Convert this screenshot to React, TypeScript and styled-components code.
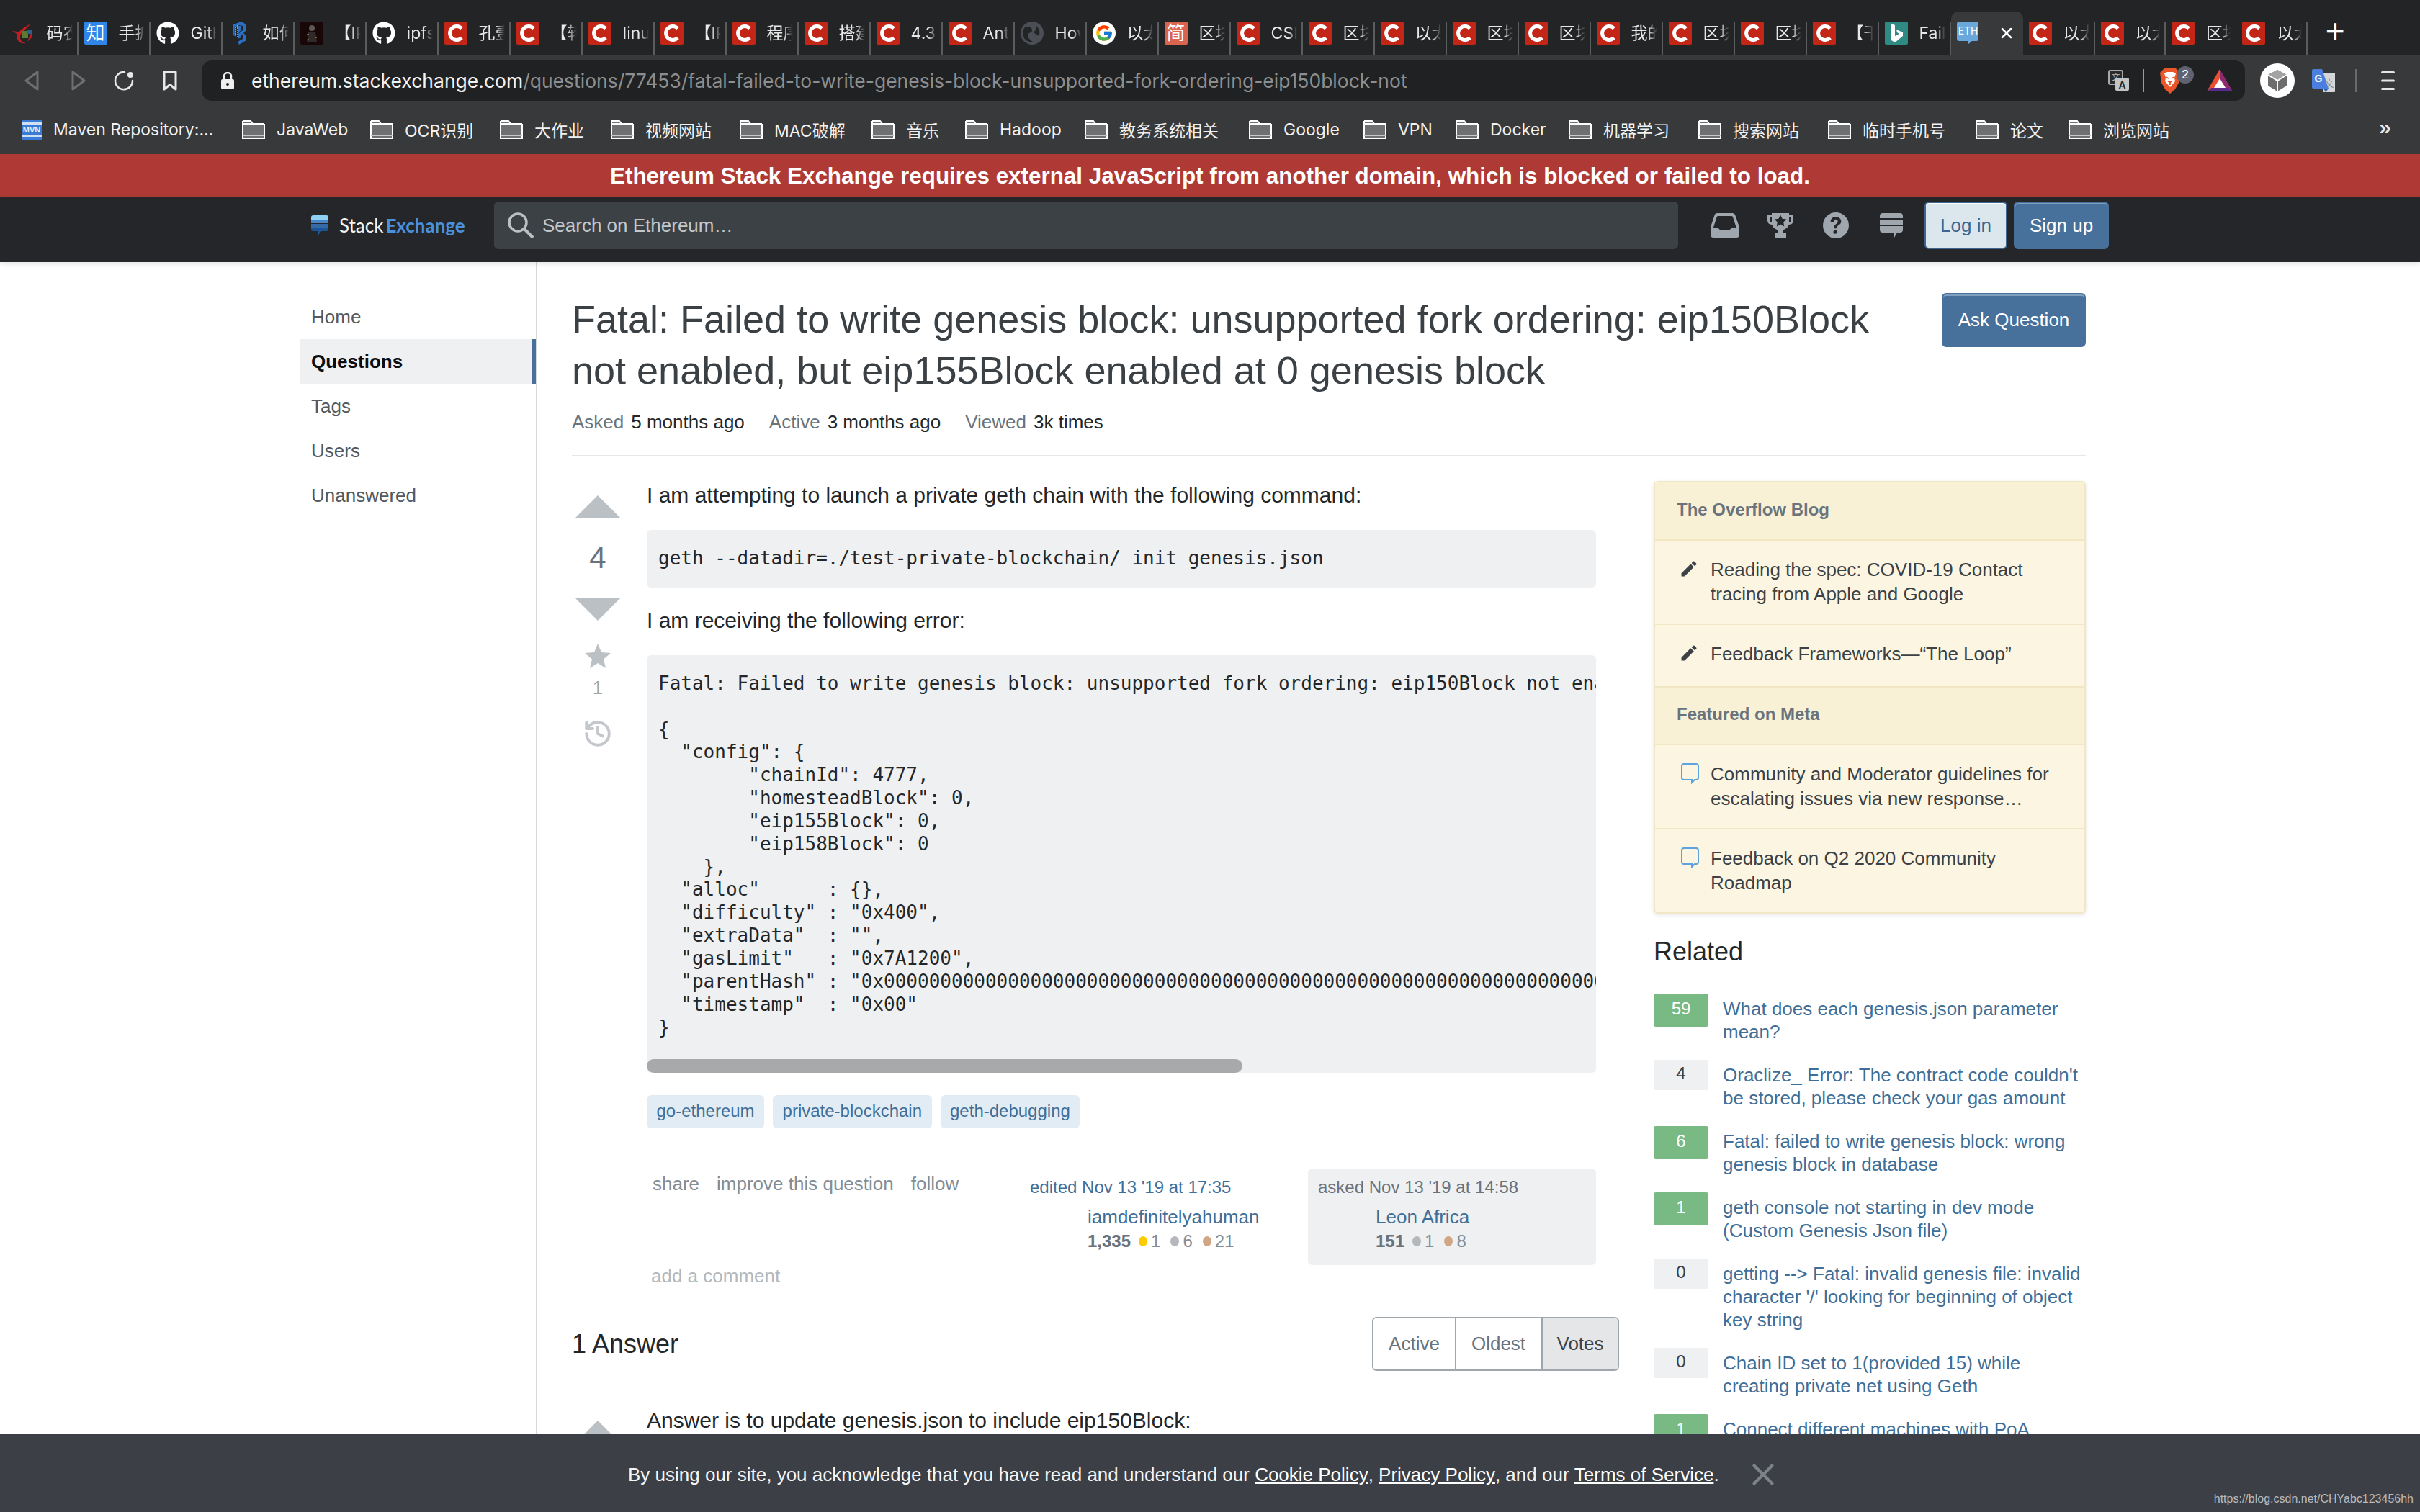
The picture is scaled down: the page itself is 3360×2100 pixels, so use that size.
import styled, { createGlobalStyle } from "styled-components";
import { History, X } from "lucide-react";
import { FaGithub } from "react-icons/fa";
import { FcGoogle } from "react-icons/fc";

const chromeFont = `"Inter", "Noto Sans CJK SC", sans-serif`;

const GlobalStyle = createGlobalStyle`
  html, body {
    margin: 0;
    padding: 0;
    background: #fff;
    font-family: "Liberation Sans", "Noto Sans CJK SC", sans-serif;
  }
  * { box-sizing: border-box; }
`;

const Page = styled.div`
  position: relative;
  width: 3360px;
  height: 2100px;
  overflow: hidden;
  background: #fff;
`;

/* browser chrome */
const TabStrip = styled.div`
  display: flex;
  align-items: flex-end;
  height: 76px;
  padding-left: 8.6px;
  background: #232425;
`;

const Tab = styled.div<{ $width?: number; $active?: boolean }>`
  position: relative;
  display: flex;
  flex: none;
  gap: 16px;
  width: ${(p) => p.$width ?? 100}px;
  height: 60px;
  padding: 14px 8px 0;
  border-radius: 10px 10px 0 0;
  background: ${(p) => (p.$active ? "#38393a" : "transparent")};
  color: #e8e8e8;
  font-family: ${chromeFont};
  font-size: 23px;
  line-height: 32px;
  &::after {
    content: "";
    position: absolute;
    top: 14px;
    right: 0;
    bottom: 0;
    width: 1.5px;
    background: ${(p) => (p.$active ? "transparent" : "#5b5c5d")};
  }
`;

const TabTitle = styled.span`
  flex: 1;
  min-width: 0;
  overflow: hidden;
  white-space: nowrap;
  -webkit-mask-image: linear-gradient(to right, #000 65%, transparent 100%);
  mask-image: linear-gradient(to right, #000 65%, transparent 100%);
`;

const TabClose = styled.span`
  display: flex;
  align-items: center;
  margin-left: 9px;
  height: 32px;
  color: #fff;
`;

const NewTab = styled.span`
  margin-left: 25px;
  width: 24px;
  height: 60px;
  color: #fff;
  font-size: 46px;
  line-height: 54px;
  text-align: center;
`;

const Favicon = styled.span<{ $bg?: string; $round?: boolean }>`
  position: relative;
  display: flex;
  flex: none;
  align-items: center;
  justify-content: center;
  width: 32px;
  height: 32px;
  overflow: hidden;
  border-radius: ${(p) => (p.$round ? "50%" : "2px")};
  background: ${(p) => p.$bg ?? "transparent"};
  color: #fff;
  font-size: 26px;
  line-height: 32px;
`;

const EthLabel = styled.span`
  position: relative;
  margin-top: -6px;
  font-size: 14px;
`;

const EthBubble = styled.svg`
  position: absolute;
  top: 0;
  left: 0;
`;

const Toolbar = styled.div`
  display: flex;
  align-items: center;
  height: 64px;
  padding-top: 8px;
  background: #38393a;
`;

const NavIcons = styled.div`
  display: flex;
  align-items: center;
  width: 280px;
  height: 56px;
  padding-left: 34px;
`;

const NavSlot = styled.span<{ $width: number }>`
  display: flex;
  flex: none;
  align-items: center;
  width: ${(p) => p.$width}px;
`;

const AddressBar = styled.div`
  display: flex;
  align-items: center;
  width: 2837px;
  height: 56px;
  padding: 0 0 0 27px;
  border-radius: 14px;
  background: #202122;
`;

const LockSlot = styled.span`
  display: flex;
  width: 42px;
`;

const Url = styled.div`
  flex: 1;
  color: #8d8e8f;
  font-family: ${chromeFont};
  font-size: 26.5px;
  white-space: nowrap;
`;

const UrlHost = styled.span`
  color: #f2f2f2;
`;

const ExtensionRow = styled.div`
  display: flex;
  align-items: center;
  height: 56px;
  padding-right: 17px;
`;

const VerticalRule = styled.span<{ $margin: string; $color: string }>`
  display: block;
  width: 2px;
  height: 32px;
  margin: ${(p) => p.$margin};
  background: ${(p) => p.$color};
`;

const BraveWrap = styled.span`
  position: relative;
  display: block;
  width: 28px;
  height: 36px;
  margin-right: 37px;
`;

const BraveBadge = styled.span`
  position: absolute;
  top: -2px;
  right: -19px;
  width: 24px;
  height: 24px;
  border-radius: 50%;
  background: #5f6270;
  color: #fff;
  font-size: 17px;
  line-height: 24px;
  text-align: center;
`;

const ProfileRow = styled.div`
  display: flex;
  align-items: center;
  margin-left: 21px;
`;

const TranslateIcon = styled.svg`
  margin-left: 24px;
`;

const BookmarkBar = styled.div`
  position: relative;
  display: flex;
  align-items: center;
  height: 74px;
  padding: 6px 0 0 30px;
  background: #38393a;
`;

const BookmarkItem = styled.div<{ $width: number }>`
  display: flex;
  flex: none;
  align-items: center;
  gap: 16px;
  width: ${(p) => p.$width}px;
  color: #f1f1f1;
  font-family: ${chromeFont};
  font-size: 23px;
  white-space: nowrap;
`;

const MoreBookmarks = styled.span`
  position: absolute;
  top: 20px;
  right: 40px;
  color: #e6e6e6;
  font-size: 30px;
  font-weight: 700;
`;

const Notice = styled.div`
  height: 60px;
  background: #ae3935;
  color: #fff;
  font-size: 31.4px;
  font-weight: 700;
  line-height: 61px;
  text-align: center;
`;

/* site header */
const TopBar = styled.header`
  position: relative;
  z-index: 1;
  display: flex;
  align-items: center;
  height: 90px;
  padding: 0 0 12px 432px;
  background: #242629;
  box-shadow: 0 2px 8px rgba(0, 0, 0, 0.12);
`;

const Logo = styled.div`
  display: flex;
  align-items: center;
  gap: 15px;
  width: 254px;
  color: #f2f3f3;
  font-family: "Lato", sans-serif;
  font-size: 26px;
`;

const LogoAccent = styled.span`
  margin-left: 3px;
  color: #4a90dc;
  font-weight: 700;
`;

const Search = styled.div`
  display: flex;
  align-items: center;
  gap: 11px;
  width: 1644px;
  height: 66px;
  padding-left: 18px;
  border-radius: 6px;
  background: #3c4146;
  color: #c3c7cb;
  font-size: 26px;
`;

const TopIcons = styled.div`
  display: flex;
  margin: 0 8px 0 26px;
`;

const TopIcon = styled.span`
  display: flex;
  align-items: center;
  justify-content: center;
  width: 77px;
  height: 66px;
`;

const HeaderButton = styled.button<{ $primary?: boolean }>`
  height: 66px;
  margin-right: 9px;
  padding: 0;
  width: ${(p) => (p.$primary ? 132 : 115)}px;
  border: 2px solid ${(p) => (p.$primary ? "#47709b" : "#3d6791")};
  border-radius: 6px;
  background: ${(p) => (p.$primary ? "#47709b" : "#dce6ed")};
  box-shadow: inset 0 2px 0 ${(p) => (p.$primary ? "#7f9fbf" : "#fff")};
  color: ${(p) => (p.$primary ? "#fff" : "#3d6791")};
  font-family: inherit;
  font-size: 26px;
`;

/* page body */
const Body = styled.div`
  display: flex;
  padding-left: 416px;
`;

const LeftNav = styled.nav`
  flex: none;
  width: 330px;
  min-height: 1800px;
  padding-top: 45px;
  border-right: 2px solid #d6d9dc;
`;

const NavItem = styled.div<{ $current?: boolean }>`
  height: 62px;
  padding-left: 16px;
  border-right: ${(p) => (p.$current ? "6px solid #47709b" : "none")};
  background: ${(p) => (p.$current ? "#eff0f1" : "transparent")};
  color: ${(p) => (p.$current ? "#0c0d0e" : "#525960")};
  font-size: 26px;
  font-weight: ${(p) => (p.$current ? 700 : 400)};
  line-height: 62px;
`;

const Content = styled.main`
  width: 2150px;
  padding: 44px 0 0 48px;
`;

const QuestionHead = styled.div`
  display: flex;
  justify-content: space-between;
  width: 2102px;
`;

const Title = styled.h1`
  width: 1850px;
  margin: 0;
  color: #3b4045;
  font-size: 54px;
  font-weight: 400;
  line-height: 71px;
`;

const AskButton = styled.button`
  flex: none;
  width: 200px;
  height: 75px;
  margin-top: -1px;
  padding: 0;
  border: 2px solid #47709b;
  border-radius: 6px;
  background: #47709b;
  box-shadow: inset 0 2px 0 #7f9fbf;
  color: #fff;
  font-family: inherit;
  font-size: 26px;
`;

const Stats = styled.div`
  display: flex;
  gap: 34px;
  width: 2102px;
  height: 70px;
  margin-top: 14px;
  padding-top: 2px;
  border-bottom: 2px solid #e4e6e8;
  font-size: 26px;
  line-height: 40px;
`;

const Stat = styled.span`
  color: #242729;
`;

const StatLabel = styled.span`
  margin-right: 10px;
  color: #6a737c;
`;

const Columns = styled.div`
  display: flex;
  gap: 48px;
  width: 2102px;
  padding-top: 34px;
`;

const MainColumn = styled.div`
  flex: none;
  width: 1454px;
`;

const PostRow = styled.div`
  display: flex;
`;

const VoteCell = styled.div`
  display: flex;
  flex: none;
  flex-direction: column;
  align-items: center;
  width: 72px;
  margin-right: 32px;
  padding-top: 20px;
`;

const Arrow = styled.span<{ $down?: boolean }>`
  width: 0;
  height: 0;
  border-left: 32px solid transparent;
  border-right: 32px solid transparent;
  ${(p) => (p.$down ? "border-top: 32px solid #bbc0c4;" : "border-bottom: 32px solid #bbc0c4;")}
`;

const VoteCount = styled.div`
  height: 110px;
  color: #6a737c;
  font-size: 42px;
  line-height: 110px;
`;

const FavStar = styled.svg`
  margin-top: 32px;
`;

const FavCount = styled.div`
  margin: 12px 0 28px;
  color: #9fa6ad;
  font-size: 26px;
  line-height: 30px;
`;

const PostBody = styled.div`
  width: 1318px;
  min-width: 0;
`;

const Para = styled.p<{ $top?: number }>`
  margin: ${(p) => p.$top ?? 0}px 0 0;
  color: #242729;
  font-size: 30px;
  line-height: 39px;
`;

const CodeBlock = styled.div<{ $top: number }>`
  margin-top: ${(p) => p.$top}px;
  border-radius: 6px;
  background: #eff0f1;
  overflow: hidden;
`;

const Code = styled.pre<{ $padTop: number; $padBottom: number }>`
  margin: 0;
  padding: ${(p) => p.$padTop}px 16px ${(p) => p.$padBottom}px;
  overflow: hidden;
  color: #242729;
  font-family: "DejaVu Sans Mono", monospace;
  font-size: 26px;
  line-height: 31.85px;
`;

const ScrollThumb = styled.div<{ $width: number }>`
  width: ${(p) => p.$width}px;
  height: 19px;
  border-radius: 10px;
  background: #a8a9aa;
`;

const TagRow = styled.div`
  display: flex;
  gap: 12px;
  margin-top: 31px;
`;

const TagPill = styled.span`
  height: 46px;
  padding: 0 13.5px;
  border-radius: 6px;
  background: #e1ecf4;
  color: #3f6f98;
  font-size: 24px;
  line-height: 44px;
`;

const PostMenuRow = styled.div`
  display: flex;
  margin-top: 56px;
`;

const PostLinks = styled.div`
  display: flex;
  flex: 1;
  gap: 24px;
  padding: 6px 0 0 8px;
  color: #848d95;
  font-size: 26px;
  line-height: 30px;
`;

const UserCard = styled.div<{ $owner?: boolean }>`
  flex: none;
  width: 400px;
  height: 134px;
  padding: 12px 14px;
  border-radius: 6px;
  background: ${(p) => (p.$owner ? "#eff0f1" : "transparent")};
  color: ${(p) => (p.$owner ? "#6a737c" : "#3f6f98")};
  font-size: 24px;
  line-height: 28px;
`;

const UserName = styled.div`
  margin: 12px 0 0 80px;
  color: #3f6f98;
  font-size: 26px;
  line-height: 30px;
`;

const UserRep = styled.div`
  display: flex;
  align-items: center;
  margin: 4px 0 0 80px;
  color: #848d95;
  font-size: 24px;
  line-height: 30px;
`;

const RepValue = styled.b`
  margin-right: 11px;
  color: #6a737c;
`;

const Dot = styled.i<{ $color: string }>`
  display: block;
  width: 12px;
  height: 14px;
  margin-right: 5px;
  border-radius: 50%;
  background: ${(p) => p.$color};
`;

const BadgeCount = styled.span`
  margin-right: 14px;
`;

const AddComment = styled.div`
  margin: -1px 0 0 6px;
  color: #b3b8bc;
  font-size: 26px;
  line-height: 32px;
`;

const AnswerHead = styled.div`
  display: flex;
  align-items: center;
  justify-content: space-between;
  margin-top: 41px;
`;

const AnswerTitle = styled.h2`
  margin: 0;
  color: #242729;
  font-size: 36px;
  font-weight: 400;
`;

const SortGroup = styled.div`
  display: flex;
  height: 75px;
  border: 2px solid #9fa6ad;
  border-radius: 6px;
  overflow: hidden;
`;

const SortButton = styled.span<{ $width: number; $on?: boolean }>`
  width: ${(p) => p.$width}px;
  border-left: ${(p) => (p.$on ? "2px solid #9fa6ad" : "1px solid #9fa6ad")};
  background: ${(p) => (p.$on ? "#e4e6e8" : "#fff")};
  color: ${(p) => (p.$on ? "#3c4146" : "#6a737c")};
  font-size: 26px;
  line-height: 71px;
  text-align: center;
  &:first-child {
    border-left: none;
  }
`;

const AnswerRow = styled(PostRow)`
  margin-top: 49px;
`;

/* right sidebar */
const SideColumn = styled.aside`
  flex: none;
  width: 600px;
`;

const YellowBox = styled.div`
  border: 2px solid #f1e7c4;
  border-radius: 6px;
  background: #fbf5e1;
  box-shadow: 0 2px 6px rgba(0, 0, 0, 0.1);
`;

const YellowHead = styled.div<{ $first?: boolean }>`
  height: ${(p) => (p.$first ? 79 : 80)}px;
  border-top: ${(p) => (p.$first ? "none" : "2px solid #f1e7c4")};
  padding-left: 30px;
  background: #f9f1d6;
  color: #6a737c;
  font-size: 24px;
  font-weight: 700;
  line-height: ${(p) => (p.$first ? 76 : 74)}px;
`;

const YellowItem = styled.div`
  display: flex;
  border-top: 2px solid #f1e7c4;
  padding: 23px 24px 24px 33px;
  color: #3c4146;
  font-size: 26px;
  line-height: 34px;
`;

const ItemIcon = styled.span`
  flex: none;
  width: 44px;
  padding-top: 2px;
`;

const RelatedTitle = styled.h4`
  margin: 28px 0 33px;
  color: #242729;
  font-size: 36px;
  font-weight: 400;
  line-height: 50px;
`;

const RelatedList = styled.div`
  display: flex;
  flex-direction: column;
  gap: 23px;
`;

const RelatedRow = styled.div`
  display: flex;
  gap: 20px;
`;

const Score = styled.span<{ $answered: boolean }>`
  flex: none;
  width: 76px;
  height: ${(p) => (p.$answered ? 46 : 42)}px;
  border-radius: 3px;
  background: ${(p) => (p.$answered ? "#79b983" : "#eff0f1")};
  color: ${(p) => (p.$answered ? "#fff" : "#3c4146")};
  font-size: 24px;
  line-height: ${(p) => (p.$answered ? 42 : 38)}px;
  text-align: center;
`;

const RelatedLink = styled.span`
  width: 500px;
  margin-top: 5px;
  color: #3f6f98;
  font-size: 26px;
  line-height: 32px;
`;

/* overlays */
const CookieBar = styled.div`
  position: absolute;
  left: 0;
  right: 0;
  bottom: 0;
  display: flex;
  align-items: center;
  height: 108px;
  padding: 4px 0 0 872px;
  background: #3c4046;
  color: #f4f4f5;
  font-size: 26px;
`;

const CookieLink = styled.span`
  color: #fff;
  text-decoration: underline;
`;

const CookieClose = styled.span`
  display: flex;
  margin-left: 36px;
  color: #7d8288;
`;

const Watermark = styled.span`
  position: absolute;
  right: 9px;
  bottom: 9px;
  color: #b9babc;
  font-size: 16px;
`;

const CsdnIcon = () => (
  <Favicon $bg="#c32516">
    <svg width="24" height="26" viewBox="0 0 24 26">
      <path d="M20 6.5 A9.5 9.5 0 1 0 20 19.5" fill="none" stroke="#fff" strokeWidth="5" />
    </svg>
  </Favicon>
);

const tabIcon = (kind: string) => {
  switch (kind) {
    case "flame":
      return (
        <Favicon>
          <svg width="32" height="32" viewBox="0 0 32 32">
            <path d="M25 1c0 4-6 5-11 9C9 14 5 18 7 24c1 4 6 7 12 6-4-1-8-3-8-8 0-6 5-9 9-13 3-3 5-5 5-8z" fill="#c61d22" />
            <path d="M0 13c4 0 7 1 10 3l-2 2C5 16 3 15 0 13z" fill="#c61d22" />
            <rect x="14" y="13" width="8" height="10" fill="#5d7a33" />
            <rect x="21" y="11" width="6" height="6" fill="#2d5f8f" />
            <path d="M27 17c1 4-1 8-6 10 2-3 3-6 3-9z" fill="#c61d22" />
          </svg>
        </Favicon>
      );
    case "zhi":
      return <Favicon $bg="#2f85e8">知</Favicon>;
    case "github":
      return (
        <Favicon>
          <FaGithub size={32} color="#fff" />
        </Favicon>
      );
    case "b3":
      return (
        <Favicon>
          <svg width="20" height="32" viewBox="0 0 20 32">
            <path d="M1 4l11-4 7 4v8l-4 4 4 4v6l-10 6-2-4 7-4v-5l-5-3 5-4V6l-5-1-4 2v14l-4-2z" fill="#2a6fc0" />
            <path d="M2 7v11l3 2V5z" fill="#1f5ba6" />
            <path d="M3 8h1M3 11h1M3 14h1M3 17h1M6 6h1M6 9h1M6 12h1M6 15h1M6 18h1M6 21h1" stroke="#8fb9e6" strokeWidth="1.5" />
            <path d="M7 6h5v6l-4 3 4 3v4l-5 2z" fill="#2a6fc0" />
          </svg>
        </Favicon>
      );
    case "dark":
      return (
        <Favicon $bg="#190606">
          <svg width="20" height="28" viewBox="0 0 20 28">
            <circle cx="10" cy="7" r="4" fill="#5d5a55" />
            <path d="M5 12h10l2 14H3z" fill="#2f2b2a" />
            <path d="M3 16h3M14 20h3M4 23h2" stroke="#a8773c" strokeWidth="1.5" />
          </svg>
        </Favicon>
      );
    case "globe":
      return (
        <Favicon $bg="#4b4e55" $round>
          <svg width="32" height="32" viewBox="0 0 32 32">
            <path d="M6 8c5-2 10 0 10 4s-6 3-6 7 4 7 7 9c-6 1-14-3-14-12 0-3 1-6 3-8zM22 6c4 4 6 9 3 14-2-3-5-2-6-5 0-3 4-3 3-9z" fill="#232425" />
          </svg>
        </Favicon>
      );
    case "google":
      return (
        <Favicon $bg="#fff" $round>
          <FcGoogle size={26} />
        </Favicon>
      );
    case "jian":
      return <Favicon $bg="#d9654f">简</Favicon>;
    case "bing":
      return (
        <Favicon $bg="#2f8a84">
          <svg width="20" height="28" viewBox="0 0 20 28">
            <path d="M3 1l5 2v15l6-3-3-2-1-4 9 4v5L8 27l-5-3z" fill="#fff" />
          </svg>
        </Favicon>
      );
    case "eth":
      return (
        <Favicon>
          <EthBubble width="30" height="32" viewBox="0 0 30 32">
            <path d="M3 0h24a3 3 0 0 1 3 3v21a3 3 0 0 1-3 3h-6l-6 5v-5H3a3 3 0 0 1-3-3V3a3 3 0 0 1 3-3z" fill="#6aa8dc" />
          </EthBubble>
          <EthLabel>ETH</EthLabel>
        </Favicon>
      );
    default:
      return <CsdnIcon />;
  }
};

const tabs: [string, string][] = [
  ["flame", "码农"], ["zhi", "手抓"], ["github", "GitHub"], ["b3", "如何"], ["dark", "【IPFS"], ["github", "ipfs"],
  ["c", "孔壹"], ["c", "【转"], ["c", "linux"], ["c", "【IPFS"], ["c", "程序"], ["c", "搭建"], ["c", "4.3"],
  ["c", "Ant"], ["globe", "How"], ["google", "以太"], ["jian", "区块"], ["c", "CSDN"], ["c", "区块"], ["c", "以太"],
  ["c", "区块"], ["c", "区块"], ["c", "我的"], ["c", "区块"], ["c", "区块"], ["c", "【干"], ["bing", "Fail"],
];

const trailingTabs: [string, number][] = [["以太", 100], ["以太", 98.4], ["区块", 98.4], ["以太", 98.4]];

const bookmarks: [string, number][] = [
  ["JavaWeb", 178], ["OCR识别", 180], ["大作业", 154], ["视频网站", 179], ["MAC破解", 183], ["音乐", 130],
  ["Hadoop", 166], ["教务系统相关", 228], ["Google", 159], ["VPN", 128], ["Docker", 157], ["机器学习", 180],
  ["搜索网站", 180], ["临时手机号", 205], ["论文", 129], ["浏览网站", 180],
];

const FolderIcon = () => (
  <svg width="32" height="26" viewBox="0 0 32 26">
    <path d="M1 4V1h11l3 4h16v20H1z" fill="#6f7071" />
    <path d="M1 5h30M1 1h11l3 4" fill="none" stroke="#fff" strokeWidth="2" />
    <path d="M1 1v24h30V5" fill="none" stroke="#fff" strokeWidth="2" />
    <path d="M1 21h30" stroke="#c9c9c9" strokeWidth="2" />
  </svg>
);

const MavenIcon = () => (
  <svg width="28" height="28" viewBox="0 0 28 28">
    <rect width="28" height="28" fill="#cfe0f5" />
    <rect width="28" height="4" fill="#3a7bd5" />
    <rect y="7" width="28" height="14" fill="#3a7bd5" />
    <rect y="24" width="28" height="4" fill="#3a7bd5" />
    <text x="14" y="18" fill="#e8f1fb" fontFamily="Liberation Sans" fontSize="11" fontWeight="700" textAnchor="middle">MVN</text>
  </svg>
);

const StackLogo = () => (
  <svg width="24" height="28" viewBox="0 0 24 28">
    <path d="M3 0h18a3 3 0 0 1 3 3v3H0V3a3 3 0 0 1 3-3z" fill="#8fd0f5" />
    <rect y="7" width="24" height="4" fill="#4a86c5" />
    <rect y="12" width="24" height="5" fill="#3669a8" />
    <path d="M0 18h24v1a3 3 0 0 1-3 3h-7l-1 0-3 6v-6H3a3 3 0 0 1-3-3z" fill="#1f5596" />
  </svg>
);

const Edit = () => (
  <svg width="28" height="28" viewBox="0 0 24 24" fill="#3c4146">
    <path d="M3 17.25V21h3.75L17.81 9.94l-3.75-3.75L3 17.25zM20.71 7.04a1 1 0 0 0 0-1.41l-2.34-2.34a1 1 0 0 0-1.41 0l-1.83 1.83 3.75 3.75 1.83-1.83z" />
  </svg>
);

const Bubble = () => (
  <svg width="28" height="29" viewBox="-3 0 28 29">
    <path d="M4 1h17a3 3 0 0 1 3 3v16a3 3 0 0 1-3 3h-2l-4 4v-4H4a3 3 0 0 1-3-3V4a3 3 0 0 1 3-3z" fill="none" stroke="#5ba4e0" strokeWidth="2" />
  </svg>
);

const related: [number, string][] = [
  [59, "What does each genesis.json parameter mean?"],
  [4, "Oraclize_ Error: The contract code couldn't be stored, please check your gas amount"],
  [6, "Fatal: failed to write genesis block: wrong genesis block in database"],
  [1, "geth console not starting in dev mode (Custom Genesis Json file)"],
  [0, "getting --> Fatal: invalid genesis file: invalid character '/' looking for beginning of object key string"],
  [0, "Chain ID set to 1(provided 15) while creating private net using Geth"],
  [1, "Connect different machines with PoA"],
];

const errorText = `Fatal: Failed to write genesis block: unsupported fork ordering: eip150Block not enabled, but eip155Block enabled at 0

{
  "config": {
        "chainId": 4777,
        "homesteadBlock": 0,
        "eip155Block": 0,
        "eip158Block": 0
    },
  "alloc"      : {},
  "difficulty" : "0x400",
  "extraData"  : "",
  "gasLimit"   : "0x7A1200",
  "parentHash" : "0x0000000000000000000000000000000000000000000000000000000000000000",
  "timestamp"  : "0x00"
}`;

export default function App() {
  return (
    <Page>
      <GlobalStyle />
      <TabStrip>
        {tabs.map(([icon, title], i) => (
          <Tab key={i}>
            {tabIcon(icon)}
            <TabTitle>{title}</TabTitle>
          </Tab>
        ))}
        <Tab $active>
          {tabIcon("eth")}
          <TabClose>
            <X size={24} strokeWidth={2.5} />
          </TabClose>
        </Tab>
        {trailingTabs.map(([title, width], i) => (
          <Tab key={i} $width={width}>
            <CsdnIcon />
            <TabTitle>{title}</TabTitle>
          </Tab>
        ))}
        <NewTab>+</NewTab>
      </TabStrip>

      <Toolbar>
        <NavIcons>
          <NavSlot $width={65}>
            <svg width="20" height="28" viewBox="0 0 20 28">
              <path d="M18 2v24L2 14z" fill="none" stroke="#6e6f70" strokeWidth="3" strokeLinejoin="round" />
            </svg>
          </NavSlot>
          <NavSlot $width={59}>
            <svg width="20" height="28" viewBox="0 0 20 28">
              <path d="M2 2v24l16-12z" fill="none" stroke="#6e6f70" strokeWidth="3" strokeLinejoin="round" />
            </svg>
          </NavSlot>
          <NavSlot $width={68}>
            <svg width="28" height="28" viewBox="0 0 28 28">
              <path d="M15 2.200A12 12 0 1 0 26 14" fill="none" stroke="#e8e8e8" strokeWidth="2.600" strokeLinecap="round" />
              <circle cx="23" cy="6" r="4" fill="#e8e8e8" />
            </svg>
          </NavSlot>
          <NavSlot $width={24}>
            <svg width="20" height="28" viewBox="0 0 20 28">
              <path d="M2 2h16v24l-8-6.500L2 26z" fill="none" stroke="#e8e8e8" strokeWidth="3" strokeLinejoin="round" />
            </svg>
          </NavSlot>
        </NavIcons>
        <AddressBar>
          <LockSlot>
            <svg width="18" height="24" viewBox="0 0 18 24">
              <path d="M4 11V6a5 5 0 0 1 10 0v5" fill="none" stroke="#eee" strokeWidth="2.400" />
              <path d="M2 10h14a2 2 0 0 1 2 2v10a2 2 0 0 1-2 2H2a2 2 0 0 1-2-2V12a2 2 0 0 1 2-2zm7 5a2 2 0 1 0 0 4 2 2 0 0 0 0-4z" fill="#eee" fillRule="evenodd" />
            </svg>
          </LockSlot>
          <Url>
            <UrlHost>ethereum.stackexchange.com</UrlHost>
            /questions/77453/fatal-failed-to-write-genesis-block-unsupported-fork-ordering-eip150block-not
          </Url>
          <ExtensionRow>
            <svg width="30" height="30" viewBox="0 0 30 30">
              <rect x="1" y="1" width="19" height="19" rx="2" fill="#2a2b2c" stroke="#a9aaab" strokeWidth="2" />
              <text x="10.500" y="15" fill="#b9babb" fontFamily="Noto Sans CJK SC" fontSize="12" textAnchor="middle">文</text>
              <rect x="10" y="11" width="19" height="18" rx="2" fill="#c3c4c5" />
              <text x="19.500" y="26" fill="#222" fontFamily="Liberation Sans" fontSize="14" fontWeight="700" textAnchor="middle">A</text>
            </svg>
            <VerticalRule $margin="0 22px 0 18px" $color="#9a9a9a" />
            <BraveWrap>
              <svg width="28" height="36" viewBox="0 0 28 36">
                <path d="M7 0h14l4 4 3 3-2 14-5 9-7 6-7-6-5-9L0 7l3-3z" fill="#e8562a" />
                <path d="M6 8l4-2h8l4 2-2 6 1 5-7 8-7-8 1-5z" fill="#fff" />
                <path d="M8 13l4 2M20 13l-4 2M14 20v4M11 19l3 1 3-1" stroke="#e8562a" strokeWidth="1.800" fill="none" />
              </svg>
              <BraveBadge>2</BraveBadge>
            </BraveWrap>
            <svg width="36" height="32" viewBox="0 0 36 32">
              <path d="M18 0L0 31h18z" fill="#e8502f" />
              <path d="M18 0l18 31H18z" fill="#8d2a6e" />
              <path d="M0 31l6-5h24l6 5z" fill="#5a2a8c" />
              <path d="M18 13l8 13H10z" fill="#fff" />
            </svg>
          </ExtensionRow>
        </AddressBar>
        <ProfileRow>
          <svg width="48" height="48" viewBox="0 0 48 48">
            <circle cx="24" cy="24" r="24" fill="#fff" />
            <path d="M24 9l13 7v15l-13 8-13-8V16z" fill="#6d6d6d" />
            <path d="M24 9l13 7-13 8-13-8z" fill="#a3a3a3" />
            <path d="M24 24v15" stroke="#fff" strokeWidth="2" />
            <path d="M11 16l13 8 13-8" fill="none" stroke="#fff" strokeWidth="2" />
          </svg>
          <TranslateIcon width="32" height="32" viewBox="0 0 32 32">
            <rect x="15" y="5" width="17" height="27" rx="1" fill="#d5d6d7" />
            <text x="24" y="24" fill="#7d8a94" fontFamily="Noto Sans CJK SC" fontSize="13" textAnchor="middle">文</text>
            <path d="M0 2a2 2 0 0 1 2-2h12l9 27H2a2 2 0 0 1-2-2z" fill="#4a7fe0" />
            <path d="M16 27h7l-4 5z" fill="#2f5fc0" />
            <text x="9" y="18" fill="#fff" fontFamily="Liberation Sans" fontSize="14" fontWeight="700" textAnchor="middle">G</text>
          </TranslateIcon>
          <VerticalRule $margin="0 34px 0 28px" $color="#6a6a6a" />
          <svg width="19" height="26" viewBox="0 0 19 26">
            <path d="M1.500 1.500h16M1.500 13h16M1.500 24.500h16" stroke="#e6e6e6" strokeWidth="3" strokeLinecap="round" />
          </svg>
        </ProfileRow>
      </Toolbar>

      <BookmarkBar>
        <BookmarkItem $width={306}>
          <MavenIcon />
          Maven Repository:...
        </BookmarkItem>
        {bookmarks.map(([label, width]) => (
          <BookmarkItem key={label} $width={width}>
            <FolderIcon />
            {label}
          </BookmarkItem>
        ))}
        <MoreBookmarks>»</MoreBookmarks>
      </BookmarkBar>

      <Notice>Ethereum Stack Exchange requires external JavaScript from another domain, which is blocked or failed to load.</Notice>

      <TopBar>
        <Logo>
          <StackLogo />
          <span>
            Stack<LogoAccent>Exchange</LogoAccent>
          </span>
        </Logo>
        <Search>
          <svg width="38" height="38" viewBox="0 0 38 38">
            <circle cx="15" cy="15" r="12" fill="none" stroke="#bbc0c4" strokeWidth="3.500" />
            <path d="M24 24l12 12" stroke="#bbc0c4" strokeWidth="4" />
          </svg>
          Search on Ethereum…
        </Search>
        <TopIcons>
          <TopIcon>
            <svg width="40" height="34" viewBox="0 0 20 17" fill="#9fa6ad">
              <path d="M4.630 0h10.560a2 2 0 0 1 1.940 1.350L20 9.790V15a2 2 0 0 1-2 2H2a2 2 0 0 1-2-2V9.790l2.780-8.440C3.030.55 3.780 0 4.630 0zm8.280 12l2-2h2.950l-2.440-7.450a1 1 0 0 0-.95-.55H5.350a1 1 0 0 0-.95.55L1.960 10h2.950l2 2h6z" fillRule="evenodd" />
            </svg>
          </TopIcon>
          <TopIcon>
            <svg width="36" height="34" viewBox="0 0 18 17" fill="#9fa6ad">
              <path fillRule="evenodd" d="M15 1V0H3v1H0v4c0 1.500 1 3 3.200 3 .6 2 2.200 3.300 4.300 3.600V14H5v3h8v-3h-2.500v-2.400c2.100-.3 3.700-1.600 4.300-3.600C17 8 18 6.500 18 5V1h-3zM1.500 5V2.500H3v4c-1-.1-1.500-.7-1.500-1.500zM16.500 5c0 .8-.5 1.400-1.500 1.500v-4h1.500V5zM9 7.800 6.400 9.200l.5-2.900-2.100-2 2.900-.4L9 1.200l1.300 2.700 2.900.4-2.100 2 .5 2.900L9 7.800z" />
            </svg>
          </TopIcon>
          <TopIcon>
            <svg width="36" height="36" viewBox="1 1 16 16" fill="#9fa6ad">
              <path d="M9 1a8 8 0 1 0 0 16A8 8 0 0 0 9 1zm.81 12.130c-.02.71-.55 1.150-1.240 1.130-.66-.02-1.170-.49-1.150-1.200.02-.72.56-1.180 1.220-1.160.7.03 1.200.51 1.170 1.230zM11.770 8c-.59.66-1.780 1.090-2.050 1.970a4 4 0 0 0-.09.75c0 .05-.03.16-.18.16H7.880c-.16 0-.18-.1-.18-.15.06-1.350.66-2.200 1.830-2.880.39-.29.7-.75.7-1.240.01-1.240-1.640-1.820-2.350-.72-.21.33-.18.73-.18 1.100H5.750c0-1.970 1.030-3.260 3.030-3.260 1.750 0 3.470.87 3.470 2.830 0 .57-.2 1.050-.48 1.440z" />
            </svg>
          </TopIcon>
          <TopIcon>
            <svg width="32" height="34" viewBox="0 0 32 34" fill="#9fa6ad">
              <path d="M4 0h24a4 4 0 0 1 4 4v3H0V4a4 4 0 0 1 4-4zM0 9h32v7H0zM0 18h32v5a4 4 0 0 1-4 4h-4l-4 7v-7H4a4 4 0 0 1-4-4z" />
            </svg>
          </TopIcon>
        </TopIcons>
        <HeaderButton>Log in</HeaderButton>
        <HeaderButton $primary>Sign up</HeaderButton>
      </TopBar>

      <Body>
        <LeftNav>
          <NavItem>Home</NavItem>
          <NavItem $current>Questions</NavItem>
          <NavItem>Tags</NavItem>
          <NavItem>Users</NavItem>
          <NavItem>Unanswered</NavItem>
        </LeftNav>

        <Content>
          <QuestionHead>
            <Title>Fatal: Failed to write genesis block: unsupported fork ordering: eip150Block not enabled, but eip155Block enabled at 0 genesis block</Title>
            <AskButton>Ask Question</AskButton>
          </QuestionHead>
          <Stats>
            <Stat>
              <StatLabel>Asked</StatLabel>5 months ago
            </Stat>
            <Stat>
              <StatLabel>Active</StatLabel>3 months ago
            </Stat>
            <Stat>
              <StatLabel>Viewed</StatLabel>3k times
            </Stat>
          </Stats>

          <Columns>
            <MainColumn>
              <PostRow>
                <VoteCell>
                  <Arrow />
                  <VoteCount>4</VoteCount>
                  <Arrow $down />
                  <FavStar width="36" height="34" viewBox="0 0 36 34">
                    <path d="M18 0l5 12 13 1-10 8.500L29 34l-11-7-11 7 3-12.500L0 13l13-1z" fill="#bbc0c4" />
                  </FavStar>
                  <FavCount>1</FavCount>
                  <History size={42} color="#c4c8cc" strokeWidth={2.2} />
                </VoteCell>
                <PostBody>
                  <Para>I am attempting to launch a private geth chain with the following command:</Para>
                  <CodeBlock $top={29}>
                    <Code $padTop={24} $padBottom={24}>geth --datadir=./test-private-blockchain/ init genesis.json</Code>
                  </CodeBlock>
                  <Para $top={26}>I am receiving the following error:</Para>
                  <CodeBlock $top={29}>
                    <Code $padTop={24} $padBottom={28}>{errorText}</Code>
                    <ScrollThumb $width={827} />
                  </CodeBlock>
                  <TagRow>
                    <TagPill>go-ethereum</TagPill>
                    <TagPill>private-blockchain</TagPill>
                    <TagPill>geth-debugging</TagPill>
                  </TagRow>
                  <PostMenuRow>
                    <PostLinks>
                      <span>share</span>
                      <span>improve this question</span>
                      <span>follow</span>
                    </PostLinks>
                    <UserCard>
                      edited Nov 13 '19 at 17:35
                      <UserName>iamdefinitelyahuman</UserName>
                      <UserRep>
                        <RepValue>1,335</RepValue>
                        <Dot $color="#ffcc01" />
                        <BadgeCount>1</BadgeCount>
                        <Dot $color="#b4b8bc" />
                        <BadgeCount>6</BadgeCount>
                        <Dot $color="#d1a684" />
                        <BadgeCount>21</BadgeCount>
                      </UserRep>
                    </UserCard>
                    <UserCard $owner>
                      asked Nov 13 '19 at 14:58
                      <UserName>Leon Africa</UserName>
                      <UserRep>
                        <RepValue>151</RepValue>
                        <Dot $color="#b4b8bc" />
                        <BadgeCount>1</BadgeCount>
                        <Dot $color="#d1a684" />
                        <BadgeCount>8</BadgeCount>
                      </UserRep>
                    </UserCard>
                  </PostMenuRow>
                  <AddComment>add a comment</AddComment>
                </PostBody>
              </PostRow>

              <AnswerHead>
                <AnswerTitle>1 Answer</AnswerTitle>
                <SortGroup>
                  <SortButton $width={113}>Active</SortButton>
                  <SortButton $width={120}>Oldest</SortButton>
                  <SortButton $width={106} $on>Votes</SortButton>
                </SortGroup>
              </AnswerHead>

              <AnswerRow>
                <VoteCell>
                  <Arrow />
                </VoteCell>
                <PostBody>
                  <Para>Answer is to update genesis.json to include eip150Block:</Para>
                </PostBody>
              </AnswerRow>
            </MainColumn>

            <SideColumn>
              <YellowBox>
                <YellowHead $first>The Overflow Blog</YellowHead>
                <YellowItem>
                  <ItemIcon>
                    <Edit />
                  </ItemIcon>
                  <span>Reading the spec: COVID-19 Contact tracing from Apple and Google</span>
                </YellowItem>
                <YellowItem>
                  <ItemIcon>
                    <Edit />
                  </ItemIcon>
                  <span>Feedback Frameworks—“The Loop”</span>
                </YellowItem>
                <YellowHead>Featured on Meta</YellowHead>
                <YellowItem>
                  <ItemIcon>
                    <Bubble />
                  </ItemIcon>
                  <span>Community and Moderator guidelines for escalating issues via new response…</span>
                </YellowItem>
                <YellowItem>
                  <ItemIcon>
                    <Bubble />
                  </ItemIcon>
                  <span>Feedback on Q2 2020 Community Roadmap</span>
                </YellowItem>
              </YellowBox>

              <RelatedTitle>Related</RelatedTitle>
              <RelatedList>
                {related.map(([score, text]) => (
                  <RelatedRow key={text}>
                    <Score $answered={score > 0 && score !== 4}>{score}</Score>
                    <RelatedLink>{text}</RelatedLink>
                  </RelatedRow>
                ))}
              </RelatedList>
            </SideColumn>
          </Columns>
        </Content>
      </Body>

      <CookieBar>
        By using our site, you acknowledge that you have read and understand our&nbsp;
        <CookieLink>Cookie Policy</CookieLink>,&nbsp;<CookieLink>Privacy Policy</CookieLink>, and our&nbsp;
        <CookieLink>Terms of Service</CookieLink>.
        <CookieClose>
          <X size={50} strokeWidth={2} />
        </CookieClose>
        <Watermark>https://blog.csdn.net/CHYabc123456hh</Watermark>
      </CookieBar>
    </Page>
  );
}
